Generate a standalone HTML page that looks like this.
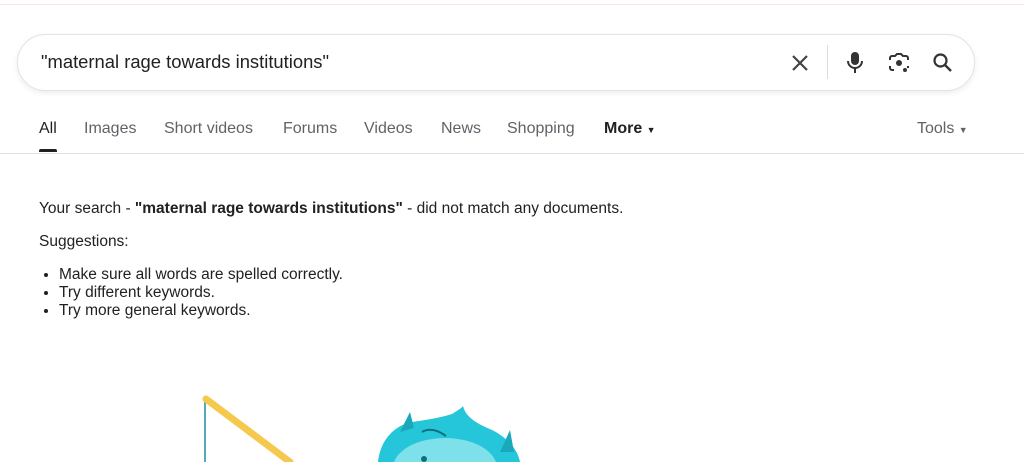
<!DOCTYPE html>
<html style="overflow:hidden"><head><meta charset="utf-8"><style>
body{margin:0;width:1024px;height:462px;overflow:hidden;background:#fff;font-family:"Liberation Sans",Arial,sans-serif;position:relative}
.top{position:absolute;left:0;top:0;width:1024px;height:4px;border-bottom:1px solid #fbe3e8}
.sb{position:absolute;left:17px;top:34px;width:956px;height:55px;border:1px solid #e3e3e3;border-radius:29px;box-shadow:0 2px 6px rgba(0,0,0,.08)}
.q{position:absolute;left:23px;top:16px;font-size:18.4px;color:#202124}
.div{position:absolute;left:809px;top:10px;width:1px;height:34px;background:#dadce0}
.tabs{position:absolute;top:120px;font-size:16px;color:#5f6368}
.tab{position:absolute;white-space:nowrap}
.line{position:absolute;left:0;top:153px;width:1024px;height:1px;background:#e3e3e3}
.ul{position:absolute;left:39px;top:149px;width:18px;height:3px;background:#202124;border-radius:2px 2px 0 0}
.t{position:absolute;left:39px;font-size:15.5px;color:#202124}
ul{position:absolute;left:39px;top:266px;margin:0;padding-left:20px;font-size:15.5px;line-height:18px;color:#202124}
</style></head><body>
<div class="top"></div>
<div class="sb"><div class="q">"maternal rage towards institutions"</div>
<svg style="position:absolute;left:773px;top:19px" width="18" height="18" viewBox="0 0 18 18"><path d="M2 2L16 16M16 2L2 16" stroke="#444" stroke-width="2.2"/></svg>
<div class="div"></div>
<svg style="position:absolute;left:827px;top:16px" width="20" height="24" viewBox="0 0 20 24"><rect x="6" y="1" width="8" height="13" rx="4" fill="#333"/><path d="M3 10a7 7 0 0014 0" stroke="#333" stroke-width="2" fill="none"/><path d="M10 17v5" stroke="#333" stroke-width="2"/></svg>
<svg style="position:absolute;left:870px;top:17px" width="22" height="22" viewBox="0 0 22 22"><path d="M2 8V6a2 2 0 012-2h3l2-2h4l2 2h3a2 2 0 012 2v2M2 14v2a2 2 0 002 2h2M20 14v2" stroke="#333" stroke-width="2" fill="none"/><circle cx="11" cy="11" r="3" fill="#333"/><circle cx="17" cy="18" r="2" fill="#333"/></svg>
<svg style="position:absolute;left:914px;top:17px" width="22" height="22" viewBox="0 0 22 22"><circle cx="8.5" cy="8.5" r="6" stroke="#333" stroke-width="2.2" fill="none"/><path d="M13 13l6 6" stroke="#333" stroke-width="2.4"/></svg>
</div>
<div class="tabs">
<span class="tab" style="left:39px;color:#202124;font-weight:500">All</span>
<span class="tab" style="left:84px">Images</span>
<span class="tab" style="left:164px">Short videos</span>
<span class="tab" style="left:283px">Forums</span>
<span class="tab" style="left:364px">Videos</span>
<span class="tab" style="left:441px">News</span>
<span class="tab" style="left:507px">Shopping</span>
<span class="tab" style="left:604px;color:#202124;font-weight:bold">More <span style="font-size:9px">▼</span></span>
<span class="tab" style="left:917px">Tools <span style="font-size:9px">▼</span></span>
</div>
<div class="ul"></div><div class="line"></div>
<div class="t" style="top:200px">Your search - <b>"maternal rage towards institutions"</b> - did not match any documents.</div>
<div class="t" style="top:233px">Suggestions:</div>
<ul><li>Make sure all words are spelled correctly.</li><li>Try different keywords.</li><li>Try more general keywords.</li></ul>
<svg style="position:absolute;left:0;top:380px" width="1024" height="82" viewBox="0 0 1024 82">
<path d="M205 19V82" stroke="#1e8fa0" stroke-width="1.5"/>
<path d="M206 19L290 82" stroke="#f5c94e" stroke-width="7" stroke-linecap="round"/>
<path d="M378 82C380 60 395 45 412 42C425 40 440 38 452 34C458 30 462 28 463 26C466 38 478 44 492 50C508 58 518 70 520 82Z" fill="#26c6da"/>
<path d="M400 52L410 32L414 48Z" fill="#1aa9bb"/>
<path d="M500 72L510 50L514 72Z" fill="#1aa9bb"/>
<ellipse cx="445" cy="88" rx="52" ry="30" fill="#7ee0ea"/>
<path d="M422 52Q432 46 446 56" stroke="#0d6f7e" stroke-width="2" fill="none"/>
<circle cx="424" cy="79" r="3" fill="#0d6f7e"/>
</svg>
</body></html>
